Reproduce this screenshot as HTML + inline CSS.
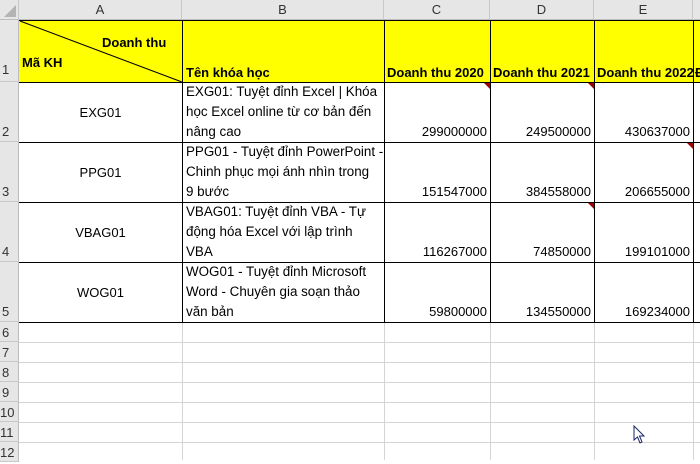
<!DOCTYPE html>
<html><head><meta charset="utf-8"><style>
*{margin:0;padding:0;box-sizing:border-box}
body{width:700px;height:460px;overflow:hidden;background:#fff;font-family:"Liberation Sans",sans-serif;font-size:13px;color:#000;position:relative}
.a{position:absolute;white-space:nowrap}
.hl{position:absolute;height:1px;background:#d4d4d4}
.vl{position:absolute;width:1px;background:#d4d4d4}
.bh{position:absolute;height:1px;background:#000}
.bv{position:absolute;width:1px;background:#000}
.ch{position:absolute;top:0;height:20px;background:#e6e6e6;border-right:1px solid #c8c8c8;border-bottom:1px solid #bdbdbd;text-align:center;line-height:20px;color:#333}
.rh{position:absolute;left:0;width:19px;background:#e6e6e6;border-bottom:1px solid #c8c8c8;border-right:1px solid #bdbdbd;color:#333;font-size:13px;padding-left:2px}
.y{position:absolute;background:#ffff00}
.b{font-weight:bold}
.num{position:absolute;text-align:right;height:16px;line-height:16px}
.tri{position:absolute;width:0;height:0;border-top:6px solid #a00000;border-left:6px solid transparent}
.btxt{position:absolute;left:186px;line-height:20px;white-space:nowrap;font-size:13.4px}
</style></head><body>
<!-- gridlines -->
<div class="vl" style="left:182px;top:20px;height:440px"></div>
<div class="vl" style="left:384px;top:20px;height:440px"></div>
<div class="vl" style="left:490px;top:20px;height:440px"></div>
<div class="vl" style="left:594px;top:20px;height:440px"></div>
<div class="vl" style="left:693px;top:20px;height:440px"></div>
<div class="hl" style="left:19px;width:681px;top:342px"></div>
<div class="hl" style="left:19px;width:681px;top:362px"></div>
<div class="hl" style="left:19px;width:681px;top:382px"></div>
<div class="hl" style="left:19px;width:681px;top:402px"></div>
<div class="hl" style="left:19px;width:681px;top:422px"></div>
<div class="hl" style="left:19px;width:681px;top:442px"></div>
<!-- yellow header -->
<div class="y" style="left:19px;top:20px;width:681px;height:62px"></div>
<svg class="a" style="left:19px;top:20px" width="164" height="63"><line x1="1" y1="1" x2="163" y2="62" stroke="#000" stroke-width="1"/></svg>
<!-- headers -->
<div class="ch" style="left:0;width:19px;background:#e6e6e6"><svg width="19" height="20" style="position:absolute;left:0;top:0"><polygon points="16,5 16,17 4,17" fill="#b4b4b4"/></svg></div>
<div class="ch" style="left:19px;width:163px">A</div>
<div class="ch" style="left:182px;width:202px">B</div>
<div class="ch" style="left:384px;width:106px">C</div>
<div class="ch" style="left:490px;width:104px">D</div>
<div class="ch" style="left:594px;width:99px">E</div>
<div class="ch" style="left:693px;width:7px;border-right:none"></div>
<div class="rh" style="top:20px;height:62px;line-height:100px">1</div>
<div class="rh" style="top:82px;height:60px;line-height:100px">2</div>
<div class="rh" style="top:142px;height:60px;line-height:100px">3</div>
<div class="rh" style="top:202px;height:60px;line-height:100px">4</div>
<div class="rh" style="top:262px;height:60px;line-height:100px">5</div>
<div class="rh" style="top:322px;height:20px;line-height:22px">6</div>
<div class="rh" style="top:342px;height:20px;line-height:22px">7</div>
<div class="rh" style="top:362px;height:20px;line-height:22px">8</div>
<div class="rh" style="top:382px;height:20px;line-height:22px">9</div>
<div class="rh" style="top:402px;height:20px;line-height:22px;padding-left:0">10</div>
<div class="rh" style="top:422px;height:20px;line-height:22px;padding-left:0">11</div>
<div class="rh" style="top:442px;height:20px;line-height:22px;padding-left:0">12</div>
<!-- black borders -->
<div class="bh" style="left:19px;width:681px;top:20px"></div>
<div class="bh" style="left:19px;width:681px;top:82px"></div>
<div class="bh" style="left:19px;width:681px;top:142px"></div>
<div class="bh" style="left:19px;width:681px;top:202px"></div>
<div class="bh" style="left:19px;width:681px;top:262px"></div>
<div class="bh" style="left:19px;width:681px;top:322px"></div>
<div class="bv" style="left:182px;top:20px;height:302px"></div>
<div class="bv" style="left:384px;top:20px;height:302px"></div>
<div class="bv" style="left:490px;top:20px;height:302px"></div>
<div class="bv" style="left:594px;top:20px;height:302px"></div>
<div class="bv" style="left:693px;top:20px;height:302px"></div>
<!-- header text -->
<div class="a b" style="left:102px;top:35px">Doanh thu</div>
<div class="a b" style="left:22px;top:55px">Mã KH</div>
<div class="a b" style="left:186px;top:65px">Tên khóa học</div>
<div class="a b" style="left:387px;top:65px">Doanh thu 2020</div>
<div class="a b" style="left:493px;top:65px">Doanh thu 2021</div>
<div class="a b" style="left:597px;top:65px">Doanh thu 2022</div>
<div class="a b" style="left:695px;top:65px">Đ</div>
<!-- col A -->
<div class="a" style="left:19px;width:163px;text-align:center;top:105px">EXG01</div>
<div class="a" style="left:19px;width:163px;text-align:center;top:165px">PPG01</div>
<div class="a" style="left:19px;width:163px;text-align:center;top:225px">VBAG01</div>
<div class="a" style="left:19px;width:163px;text-align:center;top:285px">WOG01</div>
<!-- col B -->
<div class="btxt" style="top:82px">EXG01: Tuyệt đỉnh Excel | Khóa<br>học Excel online từ cơ bản đến<br>nâng cao</div>
<div class="btxt" style="top:142px">PPG01 - Tuyệt đỉnh PowerPoint -<br>Chinh phục mọi ánh nhìn trong<br>9 bước</div>
<div class="btxt" style="top:202px">VBAG01: Tuyệt đỉnh VBA - Tự<br>động hóa Excel với lập trình<br>VBA</div>
<div class="btxt" style="top:262px">WOG01 - Tuyệt đỉnh Microsoft<br>Word - Chuyên gia soạn thảo<br>văn bản</div>
<!-- numbers -->
<div class="num" style="left:384px;width:103px;top:124px">299000000</div>
<div class="num" style="left:490px;width:101px;top:124px">249500000</div>
<div class="num" style="left:594px;width:96px;top:124px">430637000</div>
<div class="num" style="left:384px;width:103px;top:184px">151547000</div>
<div class="num" style="left:490px;width:101px;top:184px">384558000</div>
<div class="num" style="left:594px;width:96px;top:184px">206655000</div>
<div class="num" style="left:384px;width:103px;top:244px">116267000</div>
<div class="num" style="left:490px;width:101px;top:244px">74850000</div>
<div class="num" style="left:594px;width:96px;top:244px">199101000</div>
<div class="num" style="left:384px;width:103px;top:304px">59800000</div>
<div class="num" style="left:490px;width:101px;top:304px">134550000</div>
<div class="num" style="left:594px;width:96px;top:304px">169234000</div>
<!-- comment markers -->
<div class="tri" style="left:484px;top:83px"></div>
<div class="tri" style="left:588px;top:83px"></div>
<div class="tri" style="left:687px;top:143px"></div>
<div class="tri" style="left:588px;top:203px"></div>
<!-- cursor -->
<svg class="a" style="left:633px;top:425px" width="14" height="20"><path d="M1 1 L1 15 L4.5 12 L7 18 L9 17 L6.5 11 L11 11 Z" fill="#fff" stroke="#1a2a6a" stroke-width="1"/></svg>
</body></html>
